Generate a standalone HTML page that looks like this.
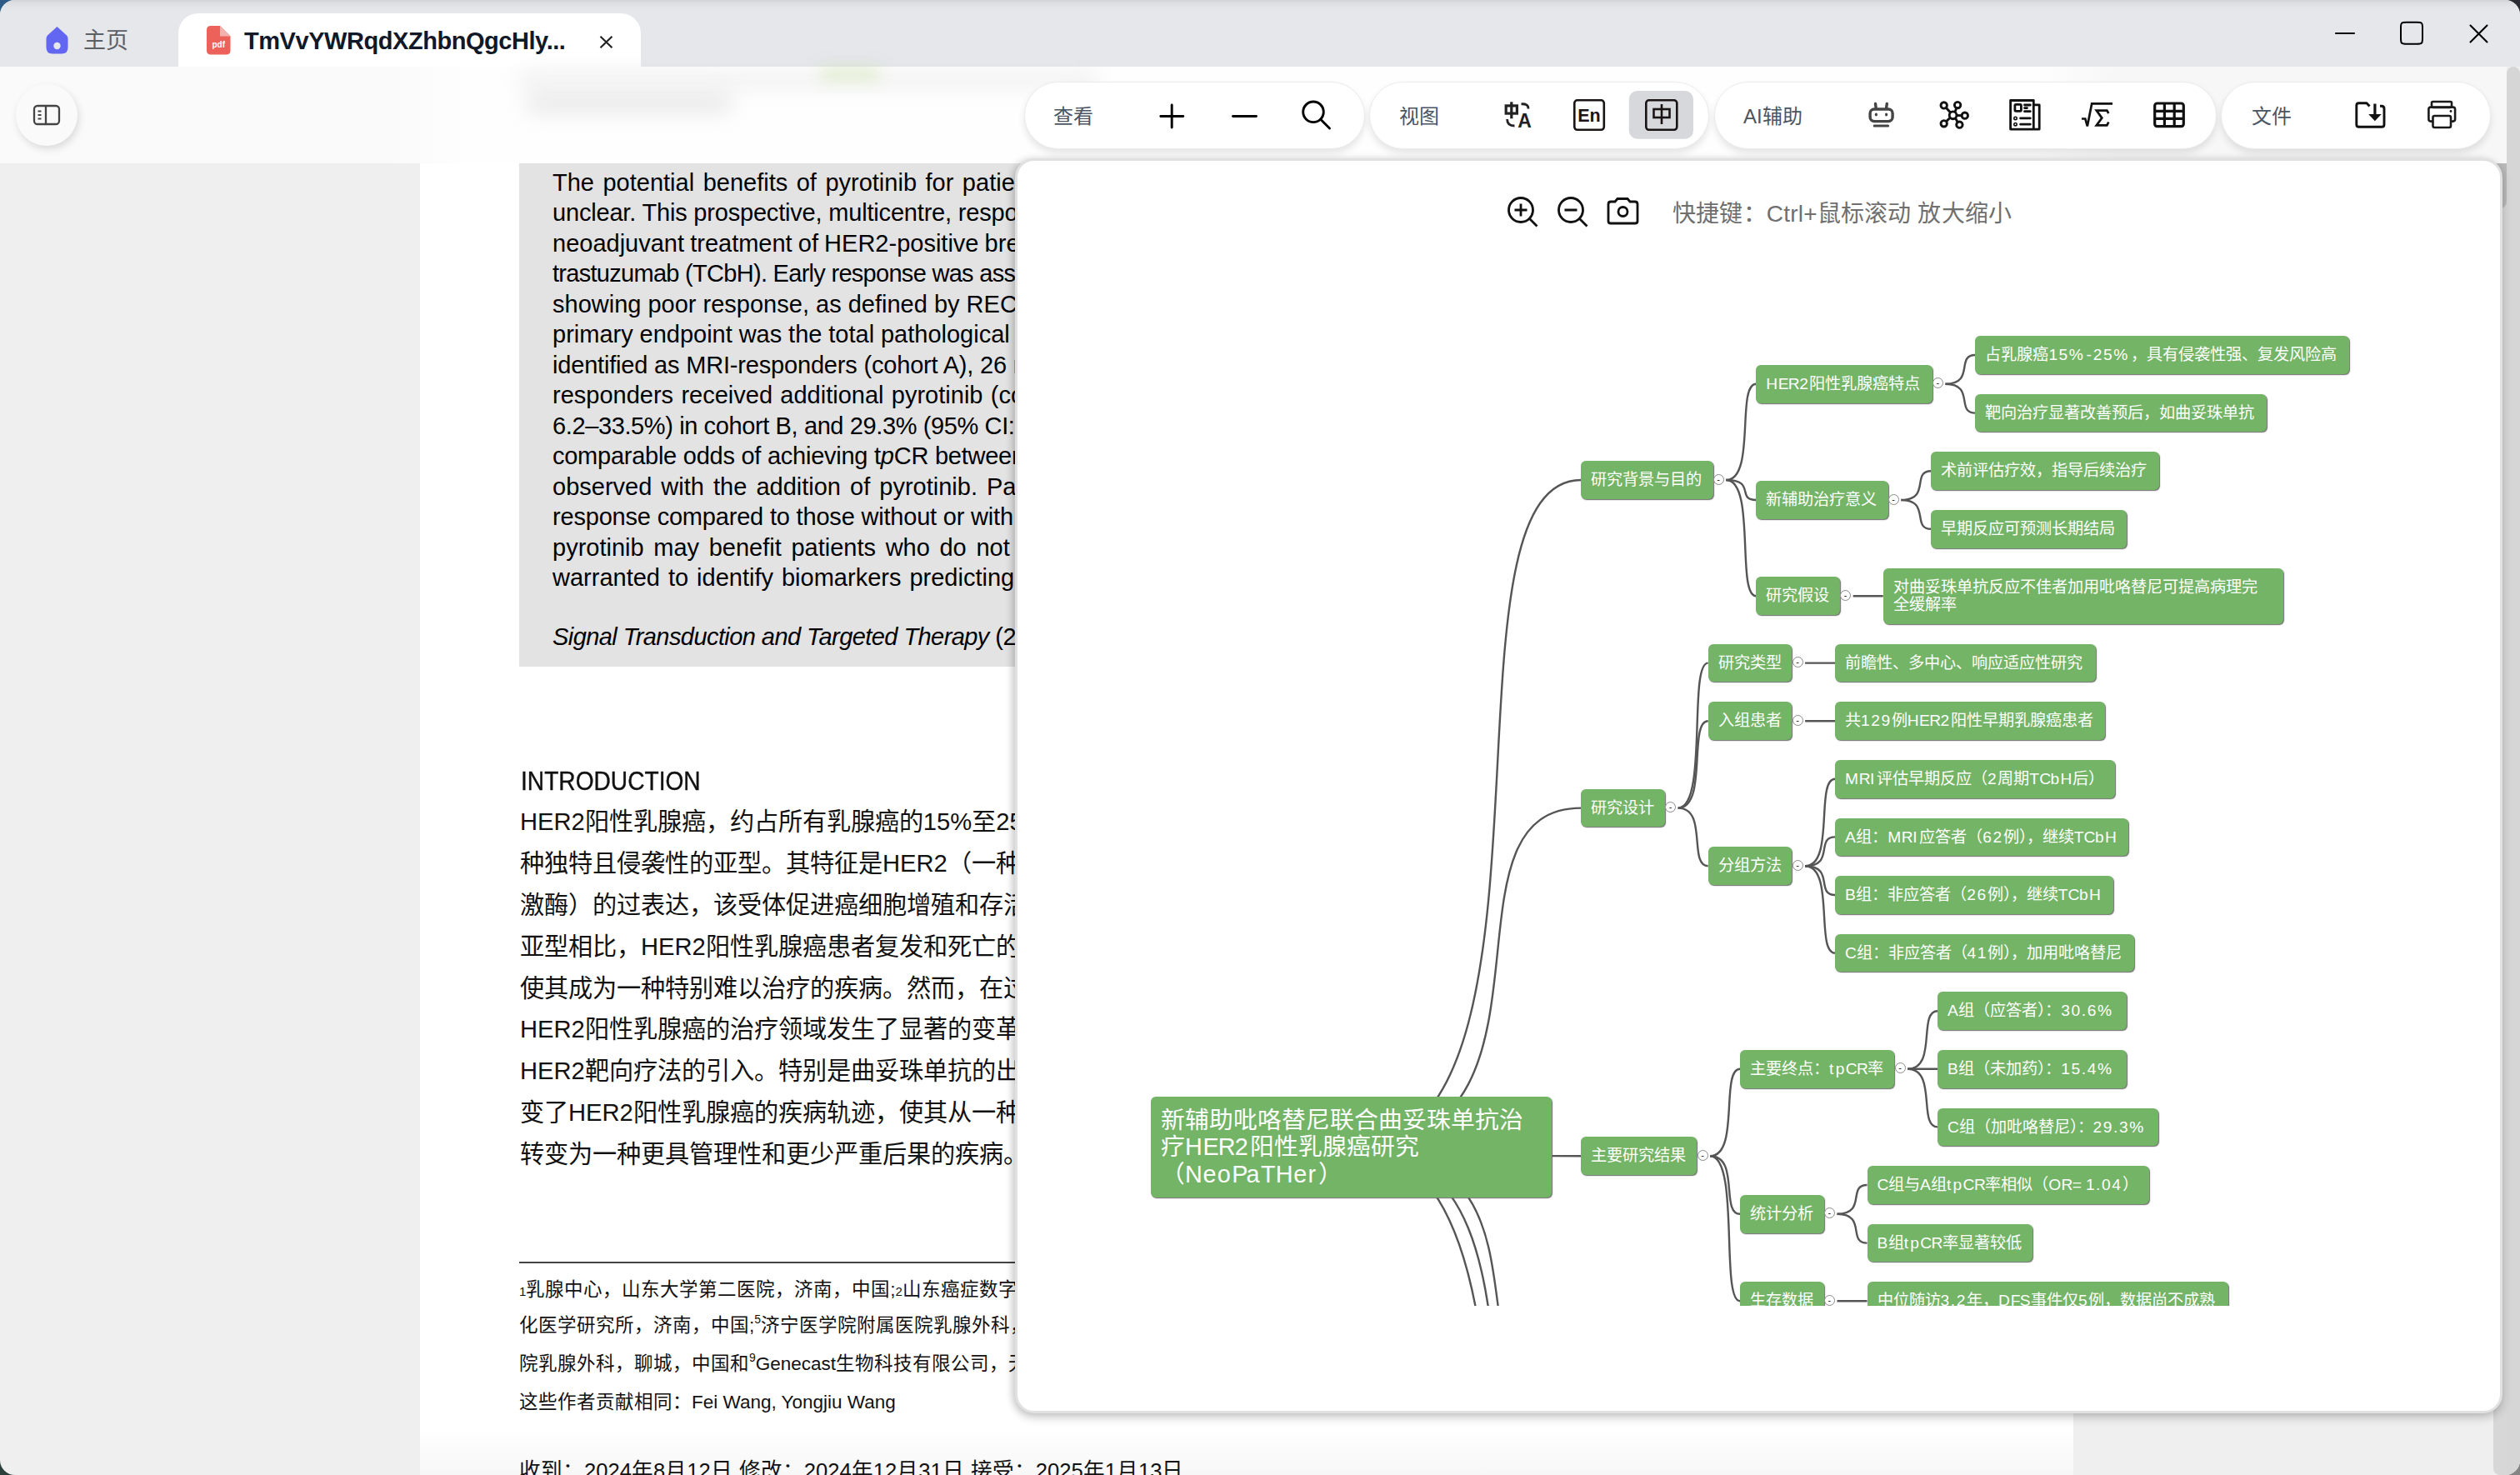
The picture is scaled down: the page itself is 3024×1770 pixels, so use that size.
<!DOCTYPE html><html lang='zh-CN'><head><meta charset='utf-8'><style>
*{box-sizing:border-box;margin:0;padding:0}
html,body{width:3024px;height:1770px;overflow:hidden;background:#2b3a44;font-family:"Liberation Sans", sans-serif}
#win{position:absolute;left:0;top:0;width:3024px;height:1770px;border-radius:18px;overflow:hidden;background:#efefef}
.abs{position:absolute}
#titlebar{left:0;top:0;width:3024px;height:80px;background:linear-gradient(#d2d3d7 0px,#dcdde1 3px,#e3e5e9 9px,#e5e7eb 14px)}
#tab{left:214px;top:16px;width:555px;height:64px;background:#fff;border-radius:24px 24px 0 0}
#page{left:504px;top:80px;width:1984px;height:1690px;background:#fff;overflow:hidden}
.ab{position:absolute;left:663px;white-space:nowrap;font-size:29px;color:#000;line-height:36px}
.zh{position:absolute;left:624px;white-space:nowrap;font-size:29.2px;color:#111;line-height:40px}
.fn{position:absolute;left:623px;white-space:nowrap;font-size:22.5px;color:#111;line-height:30px}
#header{left:0;top:80px;width:3008px;height:116px;background:linear-gradient(90deg,#fafafa 0px,#fafafa 470px,#fefefe 560px,#fefefe 2440px,#f7f7f7 2540px,#f7f7f7 3008px)}
.pill{position:absolute;top:97.5px;height:81px;background:#fff;border-radius:40.5px;border:1.5px solid #ececec;box-shadow:0 5px 9px rgba(0,0,0,0.10)}
.ptxt{position:absolute;top:0;line-height:83px;font-size:24px;color:#4b5563;white-space:nowrap}
#panel{left:1218px;top:190px;width:1785px;height:1506px;background:#fff;border:3px solid #e1e1e1;border-radius:23px;box-shadow:0 5px 12px rgba(0,0,0,0.2),-4px 0 8px rgba(0,0,0,0.1)}
.nd{position:absolute;background:#74b466;color:#fff;border-radius:6px;box-shadow:1px 1px 1.2px #6a6a6a;font-size:19.2px;line-height:21.6px;padding:12px;white-space:nowrap;overflow:hidden}
.ex{position:absolute;width:13px;height:13px;border-radius:7px;border:1px solid #8a8a8a;background:#fff;font-size:11px;line-height:10px;text-align:center;color:#222}
</style></head><body>
<div class='abs' style='left:0;top:0;width:40px;height:40px;background:#2d5a86'></div>
<div class='abs' style='left:2984px;top:0;width:40px;height:40px;background:#2a2c33'></div>
<div class='abs' style='left:0;top:1730px;width:40px;height:40px;background:#2b3f3b'></div>
<div class='abs' style='left:2984px;top:1730px;width:40px;height:40px;background:#858585'></div>
<div id='win'>
<div id='titlebar' class='abs'></div>
<svg class='abs' style='left:55px;top:32px' width='27' height='33' viewBox='0 0 27 33'>
<path d='M13.5 0 L25 10.5 Q26.5 12 26.5 14.5 L26.5 25 Q26.5 32.5 19 32.5 L8 32.5 Q0.5 32.5 0.5 25 L0.5 14.5 Q0.5 12 2 10.5 Z' fill='#6366f1'/>
<circle cx='13.5' cy='23' r='4.2' fill='#e5e7eb'/></svg>
<div class='abs' style='left:100px;top:31px;font-size:27px;line-height:36px;color:#5b5f66'>主页</div>
<div id='tab' class='abs'></div>
<svg class='abs' style='left:248px;top:31px' width='29' height='35' viewBox='0 0 29 35'>
<path d='M5 0 L16 0 L28.5 12.5 L28.5 29.5 Q28.5 34.5 23.5 34.5 L5 34.5 Q0 34.5 0 29.5 L0 5 Q0 0 5 0 Z' fill='#ec625b'/>
<path d='M16 0 L28.5 12.5 L16 12.5 Z' fill='#f4b2ad'/>
<text x='14.3' y='25.5' font-family='Liberation Sans' font-weight='bold' font-size='10' fill='#fff' text-anchor='middle'>pdf</text></svg>
<div class='abs' style='left:293px;top:30.5px;font-size:29px;line-height:36px;font-weight:bold;color:#111827;letter-spacing:-0.45px'>TmVvYWRqdXZhbnQgcHly...</div>
<svg class='abs' style='left:719px;top:43px' width='17' height='15' viewBox='0 0 17 15'><path d='M1.5 0.8 L15.5 14.2 M15.5 0.8 L1.5 14.2' stroke='#222' stroke-width='2.2'/></svg>
<svg class='abs' style='left:2790px;top:20px' width='210' height='45' viewBox='2790 20 210 45'>
<path d='M2803 40 L2825 40' stroke='#000' stroke-width='2.1' stroke-linecap='round'/>
<path d='M2887.5 26.8 L2900.5 26.8 C2906.5 26.8 2907 27.5 2907 33.5 L2907 46 C2907 52 2906.5 52.8 2900.5 52.8 L2887.5 52.8 C2881.5 52.8 2881 52 2881 46 L2881 33.5 C2881 27.5 2881.5 26.8 2887.5 26.8 Z' fill='none' stroke='#000' stroke-width='2'/>
<path d='M2964.5 30.5 L2984.5 50.5 M2984.5 30.5 L2964.5 50.5' stroke='#000' stroke-width='2.1' stroke-linecap='round'/>
</svg>
<div id='page' class='abs'>
</div>
<div class='abs' style='left:623px;top:196px;width:1400px;height:603.5px;background:#e3e3e3'></div>
<div class='ab' style='top:200.9px;word-spacing:2.45px'>The potential benefits of pyrotinib for patients with HER2-positive breast cancer remain</div>
<div class='ab' style='top:237.4px;letter-spacing:-0.188px'>unclear. This prospective, multicentre, response-adapted trial evaluated</div>
<div class='ab' style='top:273.9px;word-spacing:-0.92px'>neoadjuvant treatment of HER2-positive breast cancer with docetaxel, carboplatin and</div>
<div class='ab' style='top:310.4px;letter-spacing:-0.71px'>trastuzumab (TCbH). Early response was assessed by MRI after two cycles; patients</div>
<div class='ab' style='top:346.9px;word-spacing:0.01px'>showing poor response, as defined by RECIST, received additional pyrotinib. The</div>
<div class='ab' style='top:383.4px;word-spacing:-0.19px'>primary endpoint was the total pathological complete response rate. Of 129 patients,</div>
<div class='ab' style='top:419.9px;letter-spacing:-0.184px'>identified as MRI-responders (cohort A), 26 non-responders continued TCbH and 41 non-</div>
<div class='ab' style='top:456.4px;word-spacing:1.27px'>responders received additional pyrotinib (cohort C). tpCR rates were 30.6% (95% CI:</div>
<div class='ab' style='top:492.9px;letter-spacing:-0.385px'>6.2–33.5%) in cohort B, and 29.3% (95% CI: 16.1–45.5%) in cohort C. There were</div>
<div class='ab' style='top:529.4px;letter-spacing:-0.253px'>comparable odds of achieving t<i>p</i>CR between cohorts A and C, and improvement was</div>
<div class='ab' style='top:565.9px;word-spacing:3.01px'>observed with the addition of pyrotinib. Patients in cohort B had a lower pathological</div>
<div class='ab' style='top:602.4px;letter-spacing:-0.192px'>response compared to those without or with pyrotinib. This study suggests that</div>
<div class='ab' style='top:638.9px;word-spacing:3.59px'>pyrotinib may benefit patients who do not respond early to trastuzumab. Further study</div>
<div class='ab' style='top:675.4px;word-spacing:1.93px'>warranted to identify biomarkers predicting response to pyrotinib treatment.</div>
<div class='ab' style='top:745.5px;letter-spacing:-0.568px'><i>Signal Transduction and Targeted Therapy</i> (2025) 10:45</div>
<div class='abs' style='left:624.5px;top:918.5px;font-size:31.5px;line-height:36px;color:#111;white-space:nowrap;-webkit-text-stroke:0.4px #111;transform:scaleX(0.893);transform-origin:0 0'>INTRODUCTION</div>
<div class='zh' style='top:966.4px'>HER2阳性乳腺癌，约占所有乳腺癌的15%至25%，是一</div>
<div class='zh' style='top:1016.2px'>种独特且侵袭性的亚型。其特征是HER2（一种跨膜酪氨酸</div>
<div class='zh' style='top:1066.0px'>激酶）的过表达，该受体促进癌细胞增殖和存活。与其他</div>
<div class='zh' style='top:1115.8px'>亚型相比，HER2阳性乳腺癌患者复发和死亡的风险更高，</div>
<div class='zh' style='top:1165.6px'>使其成为一种特别难以治疗的疾病。然而，在过去二十年</div>
<div class='zh' style='top:1215.4px'>HER2阳性乳腺癌的治疗领域发生了显著的变革，这主要归</div>
<div class='zh' style='top:1265.2px'>HER2靶向疗法的引入。特别是曲妥珠单抗的出现，极大改</div>
<div class='zh' style='top:1315.0px'>变了HER2阳性乳腺癌的疾病轨迹，使其从一种预后不良的</div>
<div class='zh' style='top:1364.8px'>转变为一种更具管理性和更少严重后果的疾病。</div>
<div class='abs' style='left:623px;top:1514px;width:700px;height:1.6px;background:#444'></div>
<div class='fn' style='top:1532.5px'><span style='font-size:15px'>1</span>乳腺中心，山东大学第二医院，济南，中国;<span style='font-size:15px'>2</span>山东癌症数字</div>
<div class='fn' style='top:1576.0px'>化医学研究所，济南，中国;<span style='font-size:14px;position:relative;top:-10px'>5</span>济宁医学院附属医院乳腺外科，</div>
<div class='fn' style='top:1621.5px'>院乳腺外科，聊城，中国和<span style='font-size:14px;position:relative;top:-10px'>9</span>Genecast生物科技有限公司，无</div>
<div class='fn' style='top:1668.0px'>这些作者贡献相同：Fei Wang, Yongjiu Wang</div>
<div class='fn' style='top:1750px;font-size:25.6px;word-spacing:1px'>收到：2024年8月12日 修改：2024年12月31日 接受：2025年1月13日</div>
<div class='abs' style='left:504px;top:1712px;width:1984px;height:58px;background:linear-gradient(rgba(0,0,0,0),rgba(0,0,0,0.03))'></div>
<div class='abs' style='left:2488px;top:80px;width:536px;height:1690px;background:#efefef'></div>
<div class='abs' style='left:2992px;top:196px;width:32px;height:1574px;background:#d7d7d7;border-radius:0 0 8px 8px'></div>
<div class='abs' style='left:3008px;top:80px;width:16px;height:1690px;background:#d6d6d6;border-radius:8px 8px 0 0'></div>
<div class='abs' style='left:2992px;top:196px;width:16px;height:54px;background:#b9b9b9;border-radius:0 0 8px 8px'></div>
<div id='header' class='abs'></div>
<div class='abs' style='left:620px;top:84px;width:700px;height:22px;background:#d5d5d5;filter:blur(12px);opacity:0.3;border-radius:12px'></div>
<div class='abs' style='left:630px;top:112px;width:250px;height:24px;background:#c8c8c8;filter:blur(12px);opacity:0.38;border-radius:14px'></div>
<div class='abs' style='left:985px;top:80px;width:70px;height:18px;background:#c6e3a0;filter:blur(9px);opacity:0.4'></div>
<div class='abs' style='left:19px;top:101px;width:74px;height:74px;border-radius:37px;background:#fafafa;box-shadow:2px 4px 10px rgba(0,0,0,0.13)'></div>
<svg class='abs' style='left:38px;top:124px' width='36' height='28' viewBox='0 0 36 28'>
<rect x='3' y='3' width='30' height='22' rx='4' fill='none' stroke='#444' stroke-width='2.3'/>
<path d='M17 3 L17 25' stroke='#444' stroke-width='2.3'/>
<path d='M7.5 9.5 L11.5 9.5 M7.5 14 L11.5 14 M7.5 18.5 L11.5 18.5' stroke='#444' stroke-width='2'/>
</svg>
<div class='pill' style='left:1229px;width:409px'></div>
<div class='ptxt' style='left:1264px;top:97.5px'>查看</div>
<div class='pill' style='left:1642.5px;width:408.5px'></div>
<div class='ptxt' style='left:1678.5px;top:97.5px'>视图</div>
<div class='pill' style='left:2056.5px;width:603.5px'></div>
<div class='ptxt' style='left:2092px;top:97.5px'>AI辅助</div>
<div class='pill' style='left:2665px;width:324px'></div>
<div class='ptxt' style='left:2701.5px;top:97.5px'>文件</div>
<svg class='abs' style='left:0;top:0;overflow:visible' width='3024' height='200' viewBox='0 0 3024 200'>
<g stroke='#000' stroke-width='2.9' fill='none' stroke-linecap='round'>
<path d='M1406.2 126 L1406.2 153 M1392.8 139.5 L1419.8 139.5'/>
<path d='M1479.5 139.5 L1507.5 139.5'/>
<circle cx='1576' cy='134.3' r='12.3'/><path d='M1585 143.5 L1595.5 154'/>
</g>
<rect x='1954.8' y='109' width='77.2' height='57.8' rx='10' fill='#d7d8dc'/>
<g fill='none' stroke='#1a1414' stroke-width='2.6'>
<rect x='1889.3' y='120.3' width='35.5' height='35.5' rx='3.5'/>
<rect x='1975.3' y='120.3' width='37' height='35.5' rx='3.5'/>
</g>
<text x='1907' y='146.3' font-family='Liberation Sans' font-weight='bold' font-size='21.5' fill='#1a1414' text-anchor='middle'>En</text>
<g stroke='#1a1414' stroke-width='2.6' fill='none'>
<rect x='1984.5' y='131' width='19' height='10'/><path d='M1994 125 L1994 149'/>
</g>
<g fill='none' stroke='#222' stroke-width='3.2'>
<rect x='1807.2' y='126.9' width='13.2' height='9.2'/><path d='M1813.8 122.3 L1813.8 142.3'/>
<path d='M1825.5 124.8 Q1834 124.2 1834 130.5' stroke-width='2.8'/>
<path d='M1808.6 143 Q1808.6 151 1817.5 151' stroke-width='2.8'/>
</g>
<text x='1829.5' y='152.8' font-family='Liberation Sans' font-weight='bold' font-size='23' fill='#222' text-anchor='middle'>A</text>
<!-- robot -->
<g stroke='#444' stroke-width='3.4' fill='none' stroke-linecap='round'>
<rect x='2244.1' y='131' width='27' height='14.6' rx='5'/>
<path d='M2250.5 124.5 L2251.2 129.5 M2264.3 124.5 L2263.6 129.5'/>
<path d='M2249.2 151 L2265.6 151' stroke-width='3'/>
</g>
<ellipse cx='2251.4' cy='137.6' rx='1.6' ry='2' fill='#444'/><ellipse cx='2263.6' cy='137.6' rx='1.6' ry='2' fill='#444'/>
<!-- network -->
<g stroke='#111' stroke-width='2.9' fill='none'>
<circle cx='2343.6' cy='138.3' r='4.4'/>
<circle cx='2332.7' cy='126.4' r='3.7'/><circle cx='2349.1' cy='126.1' r='3.7'/><circle cx='2357.8' cy='138.7' r='3.7'/>
<circle cx='2332.7' cy='148.3' r='3.7'/><circle cx='2351.4' cy='149.7' r='3.7'/>
<path d='M2335.3 129.3 L2340.5 135 M2347.8 129.7 L2346 134.3 M2348 138.5 L2354 138.6 M2340.2 141.2 L2335.5 145.6 M2346.5 141.8 L2349 146.2'/>
</g>
<!-- newspaper -->
<g stroke='#111' stroke-width='2.8' fill='none' stroke-linejoin='round' stroke-linecap='round'>
<path d='M2412.6 120.5 L2440.3 120.5 L2440.3 155.1 L2412.6 155.1 Z M2440.3 125.9 L2447.2 125.9 L2447.2 155.1 L2440.3 155.1'/>
<rect x='2417.9' y='125.4' width='7.5' height='7.9' rx='1.2'/>
<path d='M2429.5 126 L2436.3 126 M2429.5 129.6 L2432.5 129.6 M2429.5 133.7 L2436.3 133.7 M2424.6 141.9 L2436.3 141.9 M2424.6 149.2 L2436.3 149.2'/>
</g>
<circle cx='2418.5' cy='141.9' r='1.7' fill='none' stroke='#111' stroke-width='1.6'/><circle cx='2418.5' cy='149.2' r='1.7' fill='none' stroke='#111' stroke-width='1.6'/>
<!-- sqrt sigma -->
<path d='M2498 142.5 L2502.3 142.5 L2504.8 151.5 L2510.2 124.3 L2535 124.3' stroke='#111' stroke-width='2.7' fill='none'/>
<path d='M2530.3 136 L2528.3 132.6 L2515.8 132.6 L2522.3 141.6 L2515.8 150.4 L2528.3 150.4 L2530.3 146.5' stroke='#111' stroke-width='2.7' fill='none' stroke-linejoin='miter'/>
<!-- table -->
<rect x='2585.7' y='124' width='34.6' height='27.6' rx='2.8' fill='none' stroke='#111' stroke-width='3.2'/>
<path d='M2585.7 133.3 L2620.3 133.3 M2585.7 142.4 L2620.3 142.4 M2597.4 124 L2597.4 151.6 M2609.2 124 L2609.2 151.6' stroke='#111' stroke-width='3.2'/>
<!-- save -->
<path d='M2843.5 127.5 L2840 123.8 L2830.6 123.8 Q2827.8 123.8 2827.8 126.6 L2827.8 149.5 Q2827.8 152.3 2830.6 152.3 L2858.2 152.3 Q2861 152.3 2861 149.5 L2861 130.4 Q2861 127.3 2857.9 127.3 L2856 127.3' fill='none' stroke='#111' stroke-width='2.9' stroke-linejoin='round'/>
<path d='M2849.9 124.4 L2849.9 138' stroke='#111' stroke-width='3.2'/><path d='M2842.2 137 L2857.6 137 L2849.9 145.2 Z' fill='#111'/>
<!-- printer -->
<g stroke='#1a1a1a' stroke-width='2.6' fill='none'>
<rect x='2918' y='122' width='24' height='7' rx='1.5'/>
<rect x='2914.4' y='128.6' width='31.7' height='17' rx='2.5'/>
<rect x='2919.5' y='139' width='21.5' height='14' rx='2' fill='#fff'/>
</g>
<circle cx='2941' cy='133.5' r='1.4' fill='#1a1a1a'/>
</svg>
<div id='panel' class='abs'></div>
<svg class='abs' style='left:0;top:0;overflow:visible' width='3024' height='300' viewBox='0 0 3024 300'>
<g stroke='#111' stroke-width='2.8' fill='none'>
<circle cx='1825' cy='252' r='14.5'/><path d='M1835.5 262.5 L1844.5 271.5 M1825 244.5 L1825 259.5 M1817.5 252 L1832.5 252'/>
<circle cx='1885' cy='252' r='14.5'/><path d='M1895.5 262.5 L1904.5 271.5 M1877.5 252 L1892.5 252'/>
<path d='M1930 245 Q1930 242 1933 242 L1938 242 L1941 238.5 L1953 238.5 L1956 242 L1962 242 Q1965 242 1965 245 L1965 265.5 Q1965 268 1962 268 L1933 268 Q1930 268 1930 265.5 Z'/>
<circle cx='1947.5' cy='254' r='5.5'/>
</g></svg>
<div class='abs' style='left:2007px;top:238px;font-size:28px;line-height:38px;color:#6f6f6f;white-space:nowrap;letter-spacing:0.2px'>快捷键：Ctrl+鼠标滚动 放大缩小</div>
<div class='abs' style='left:1221px;top:290px;width:1780px;height:1276.5px;overflow:hidden'>
<svg class='abs' style='left:-1221px;top:-290px' width='3024' height='1770' viewBox='0 0 3024 1770'><g stroke='#555' stroke-width='2.4' fill='none'><path d='M1897.3 576.0 C1713.3 576.0,1897.3 1376.6,1621.3 1376.6'/><path d='M1897.3 969.6 C1713.3 969.6,1897.3 1376.6,1621.3 1376.6'/><path d='M1897.3 1387.2 C1713.3 1387.2,1897.3 1376.6,1621.3 1376.6'/><path d='M2107.3 460.8 C2083.3 460.8,2107.3 576.0,2071.3 576.0'/><path d='M2107.3 600.0 C2083.3 600.0,2107.3 576.0,2071.3 576.0'/><path d='M2107.3 715.2 C2083.3 715.2,2107.3 576.0,2071.3 576.0'/><path d='M2049.7 795.6 C2025.7 795.6,2049.7 969.6,2013.7 969.6'/><path d='M2049.7 865.2 C2025.7 865.2,2049.7 969.6,2013.7 969.6'/><path d='M2049.7 1039.2 C2025.7 1039.2,2049.7 969.6,2013.7 969.6'/><path d='M2088.1 1282.8 C2064.1 1282.8,2088.1 1387.2,2052.1 1387.2'/><path d='M2088.1 1456.8 C2064.1 1456.8,2088.1 1387.2,2052.1 1387.2'/><path d='M2088.1 1561.2 C2064.1 1561.2,2088.1 1387.2,2052.1 1387.2'/><path d='M2370.4 426.0 C2346.4 426.0,2370.4 460.8,2334.4 460.8'/><path d='M2370.4 495.6 C2346.4 495.6,2370.4 460.8,2334.4 460.8'/><path d='M2317.3 565.2 C2293.3 565.2,2317.3 600.0,2281.3 600.0'/><path d='M2317.3 634.8 C2293.3 634.8,2317.3 600.0,2281.3 600.0'/><path d='M2259.7 715.2 C2235.7 715.2,2259.7 715.2,2223.7 715.2'/><path d='M2202.1 795.6 C2178.1 795.6,2202.1 795.6,2166.1 795.6'/><path d='M2202.1 865.2 C2178.1 865.2,2202.1 865.2,2166.1 865.2'/><path d='M2202.1 934.8 C2178.1 934.8,2202.1 1039.2,2166.1 1039.2'/><path d='M2202.1 1004.4 C2178.1 1004.4,2202.1 1039.2,2166.1 1039.2'/><path d='M2202.1 1074.0 C2178.1 1074.0,2202.1 1039.2,2166.1 1039.2'/><path d='M2202.1 1143.6 C2178.1 1143.6,2202.1 1039.2,2166.1 1039.2'/><path d='M2325.1 1213.2 C2301.1 1213.2,2325.1 1282.8,2289.1 1282.8'/><path d='M2325.1 1282.8 C2301.1 1282.8,2325.1 1282.8,2289.1 1282.8'/><path d='M2325.1 1352.4 C2301.1 1352.4,2325.1 1282.8,2289.1 1282.8'/><path d='M2240.5 1422.0 C2216.5 1422.0,2240.5 1456.8,2204.5 1456.8'/><path d='M2240.5 1491.6 C2216.5 1491.6,2240.5 1456.8,2204.5 1456.8'/><path d='M2240.5 1561.2 C2216.5 1561.2,2240.5 1561.2,2204.5 1561.2'/><path d='M1897.3 1700.0 C1713.3 1700.0,1897.3 1376.6,1621.3 1376.6'/><path d='M1897.3 1900.0 C1713.3 1900.0,1897.3 1376.6,1621.3 1376.6'/><path d='M1897.3 2200.0 C1713.3 2200.0,1897.3 1376.6,1621.3 1376.6'/></g></svg>
<div class='nd' style='left:160.0px;top:1026.0px;width:480.7px;height:121.2px;font-size:28.8px;line-height:32.4px;white-space:normal;padding:12px'>新辅助吡咯替尼联合曲妥珠单抗治疗<span style='letter-spacing:0.75px'>H</span><span style='letter-spacing:-1.01px'>E</span><span style='letter-spacing:-0.78px'>R</span><span style='letter-spacing:2.30px'>2</span>阳性乳腺癌研究（<span style='letter-spacing:0.75px'>N</span><span style='letter-spacing:1.15px'>e</span><span style='letter-spacing:1.47px'>o</span><span style='letter-spacing:-1.84px'>P</span><span style='letter-spacing:1.30px'>a</span><span style='letter-spacing:0.14px'>T</span><span style='letter-spacing:0.75px'>H</span><span style='letter-spacing:1.15px'>e</span><span style='letter-spacing:2.71px'>r</span>）</div>
<div class='nd' style='left:676.3px;top:263.2px;width:158.4px;height:45.6px'>研究背景与目的</div>
<div class='ex' style='left:834.7px;top:278.5px'>-</div>
<div class='nd' style='left:676.3px;top:656.8px;width:100.8px;height:45.6px'>研究设计</div>
<div class='ex' style='left:777.1px;top:672.1px'>-</div>
<div class='nd' style='left:676.3px;top:1074.4px;width:139.2px;height:45.6px'>主要研究结果</div>
<div class='ex' style='left:815.5px;top:1089.7px'>-</div>
<div class='nd' style='left:886.3px;top:148.0px;width:211.5px;height:45.6px'><span style='letter-spacing:0.50px'>H</span><span style='letter-spacing:-0.67px'>E</span><span style='letter-spacing:-0.52px'>R</span><span style='letter-spacing:1.54px'>2</span>阳性乳腺癌特点</div>
<div class='ex' style='left:1097.8px;top:163.3px'>-</div>
<div class='nd' style='left:886.3px;top:287.2px;width:158.4px;height:45.6px'>新辅助治疗意义</div>
<div class='ex' style='left:1044.7px;top:302.5px'>-</div>
<div class='nd' style='left:886.3px;top:402.4px;width:100.8px;height:45.6px'>研究假设</div>
<div class='ex' style='left:987.1px;top:417.7px'>-</div>
<div class='nd' style='left:828.7px;top:482.8px;width:100.8px;height:45.6px'>研究类型</div>
<div class='ex' style='left:929.5px;top:498.1px'>-</div>
<div class='nd' style='left:828.7px;top:552.4px;width:100.8px;height:45.6px'>入组患者</div>
<div class='ex' style='left:929.5px;top:567.7px'>-</div>
<div class='nd' style='left:828.7px;top:726.4px;width:100.8px;height:45.6px'>分组方法</div>
<div class='ex' style='left:929.5px;top:741.7px'>-</div>
<div class='nd' style='left:867.1px;top:970.0px;width:185.4px;height:45.6px'>主要终点：<span style='letter-spacing:2.23px'>t</span><span style='letter-spacing:1.29px'>p</span><span style='letter-spacing:-0.46px'>C</span><span style='letter-spacing:-0.52px'>R</span>率</div>
<div class='ex' style='left:1052.5px;top:985.3px'>-</div>
<div class='nd' style='left:867.1px;top:1144.0px;width:100.8px;height:45.6px'>统计分析</div>
<div class='ex' style='left:967.9px;top:1159.3px'>-</div>
<div class='nd' style='left:867.1px;top:1248.4px;width:100.8px;height:45.6px'>生存数据</div>
<div class='ex' style='left:967.9px;top:1263.7px'>-</div>
<div class='nd' style='left:1149.4px;top:113.2px;width:448.3px;height:45.6px'>占乳腺癌<span style='letter-spacing:1.54px'>1</span><span style='letter-spacing:1.54px'>5</span><span style='letter-spacing:3.57px'>%</span><span style='letter-spacing:1.94px'>-</span><span style='letter-spacing:1.54px'>2</span><span style='letter-spacing:1.54px'>5</span><span style='letter-spacing:3.57px'>%</span>，具有侵袭性强、复发风险高</div>
<div class='nd' style='left:1149.4px;top:182.8px;width:349.3px;height:45.6px'>靶向治疗显著改善预后，如曲妥珠单抗</div>
<div class='nd' style='left:1096.3px;top:252.4px;width:274.0px;height:45.6px'>术前评估疗效，指导后续治疗</div>
<div class='nd' style='left:1096.3px;top:322.0px;width:235.0px;height:45.6px'>早期反应可预测长期结局</div>
<div class='nd' style='left:1038.7px;top:391.6px;width:480.0px;height:67.2px;white-space:normal'>对曲妥珠单抗反应不佳者加用吡咯替尼可提高病理完<br>全缓解率</div>
<div class='nd' style='left:981.1px;top:482.8px;width:312.5px;height:45.6px'>前瞻性、多中心、响应适应性研究</div>
<div class='nd' style='left:981.1px;top:552.4px;width:324.4px;height:45.6px'>共<span style='letter-spacing:1.54px'>1</span><span style='letter-spacing:1.54px'>2</span><span style='letter-spacing:1.54px'>9</span>例<span style='letter-spacing:0.50px'>H</span><span style='letter-spacing:-0.67px'>E</span><span style='letter-spacing:-0.52px'>R</span><span style='letter-spacing:1.54px'>2</span>阳性早期乳腺癌患者</div>
<div class='nd' style='left:981.1px;top:622.0px;width:336.4px;height:45.6px'><span style='letter-spacing:0.58px'>M</span><span style='letter-spacing:-0.52px'>R</span><span style='letter-spacing:2.75px'>I</span>评估早期反应（<span style='letter-spacing:1.54px'>2</span>周期<span style='letter-spacing:0.10px'>T</span><span style='letter-spacing:-0.46px'>C</span><span style='letter-spacing:1.29px'>b</span><span style='letter-spacing:0.50px'>H</span>后）</div>
<div class='nd' style='left:981.1px;top:691.6px;width:352.3px;height:45.6px'><span style='letter-spacing:0.33px'>A</span>组：<span style='letter-spacing:0.58px'>M</span><span style='letter-spacing:-0.52px'>R</span><span style='letter-spacing:2.75px'>I</span>应答者（<span style='letter-spacing:1.54px'>6</span><span style='letter-spacing:1.54px'>2</span>例），继续<span style='letter-spacing:0.10px'>T</span><span style='letter-spacing:-0.46px'>C</span><span style='letter-spacing:1.29px'>b</span><span style='letter-spacing:0.50px'>H</span></div>
<div class='nd' style='left:981.1px;top:761.2px;width:333.5px;height:45.6px'><span style='letter-spacing:0.36px'>B</span>组：非应答者（<span style='letter-spacing:1.54px'>2</span><span style='letter-spacing:1.54px'>6</span>例），继续<span style='letter-spacing:0.10px'>T</span><span style='letter-spacing:-0.46px'>C</span><span style='letter-spacing:1.29px'>b</span><span style='letter-spacing:0.50px'>H</span></div>
<div class='nd' style='left:981.1px;top:830.8px;width:359.2px;height:45.6px'><span style='letter-spacing:-0.46px'>C</span>组：非应答者（<span style='letter-spacing:1.54px'>4</span><span style='letter-spacing:1.54px'>1</span>例），加用吡咯替尼</div>
<div class='nd' style='left:1104.1px;top:900.4px;width:227.2px;height:45.6px'><span style='letter-spacing:0.33px'>A</span>组（应答者）：<span style='letter-spacing:1.54px'>3</span><span style='letter-spacing:1.54px'>0</span><span style='letter-spacing:1.65px'>.</span><span style='letter-spacing:1.54px'>6</span><span style='letter-spacing:3.57px'>%</span></div>
<div class='nd' style='left:1104.1px;top:970.0px;width:227.2px;height:45.6px'><span style='letter-spacing:0.36px'>B</span>组（未加药）：<span style='letter-spacing:1.54px'>1</span><span style='letter-spacing:1.54px'>5</span><span style='letter-spacing:1.65px'>.</span><span style='letter-spacing:1.54px'>4</span><span style='letter-spacing:3.57px'>%</span></div>
<div class='nd' style='left:1104.1px;top:1039.6px;width:265.3px;height:45.6px'><span style='letter-spacing:-0.46px'>C</span>组（加吡咯替尼）：<span style='letter-spacing:1.54px'>2</span><span style='letter-spacing:1.54px'>9</span><span style='letter-spacing:1.65px'>.</span><span style='letter-spacing:1.54px'>3</span><span style='letter-spacing:3.57px'>%</span></div>
<div class='nd' style='left:1019.5px;top:1109.2px;width:338.2px;height:45.6px'><span style='letter-spacing:-0.46px'>C</span>组与<span style='letter-spacing:0.33px'>A</span>组<span style='letter-spacing:2.23px'>t</span><span style='letter-spacing:1.29px'>p</span><span style='letter-spacing:-0.46px'>C</span><span style='letter-spacing:-0.52px'>R</span>率相似（<span style='letter-spacing:0.17px'>O</span><span style='letter-spacing:-0.52px'>R</span><span style='letter-spacing:4.88px'>=</span><span style='letter-spacing:1.54px'>1</span><span style='letter-spacing:1.65px'>.</span><span style='letter-spacing:1.54px'>0</span><span style='letter-spacing:1.54px'>4</span>）</div>
<div class='nd' style='left:1019.5px;top:1178.8px;width:198.5px;height:45.6px'><span style='letter-spacing:0.36px'>B</span>组<span style='letter-spacing:2.23px'>t</span><span style='letter-spacing:1.29px'>p</span><span style='letter-spacing:-0.46px'>C</span><span style='letter-spacing:-0.52px'>R</span>率显著较低</div>
<div class='nd' style='left:1019.5px;top:1248.4px;width:433.5px;height:45.6px'>中位随访<span style='letter-spacing:1.54px'>3</span><span style='letter-spacing:1.65px'>.</span><span style='letter-spacing:1.54px'>2</span>年，<span style='letter-spacing:0.94px'>D</span><span style='letter-spacing:-0.69px'>F</span><span style='letter-spacing:0.35px'>S</span>事件仅<span style='letter-spacing:1.54px'>5</span>例，数据尚不成熟</div>
</div>
</div></body></html>
